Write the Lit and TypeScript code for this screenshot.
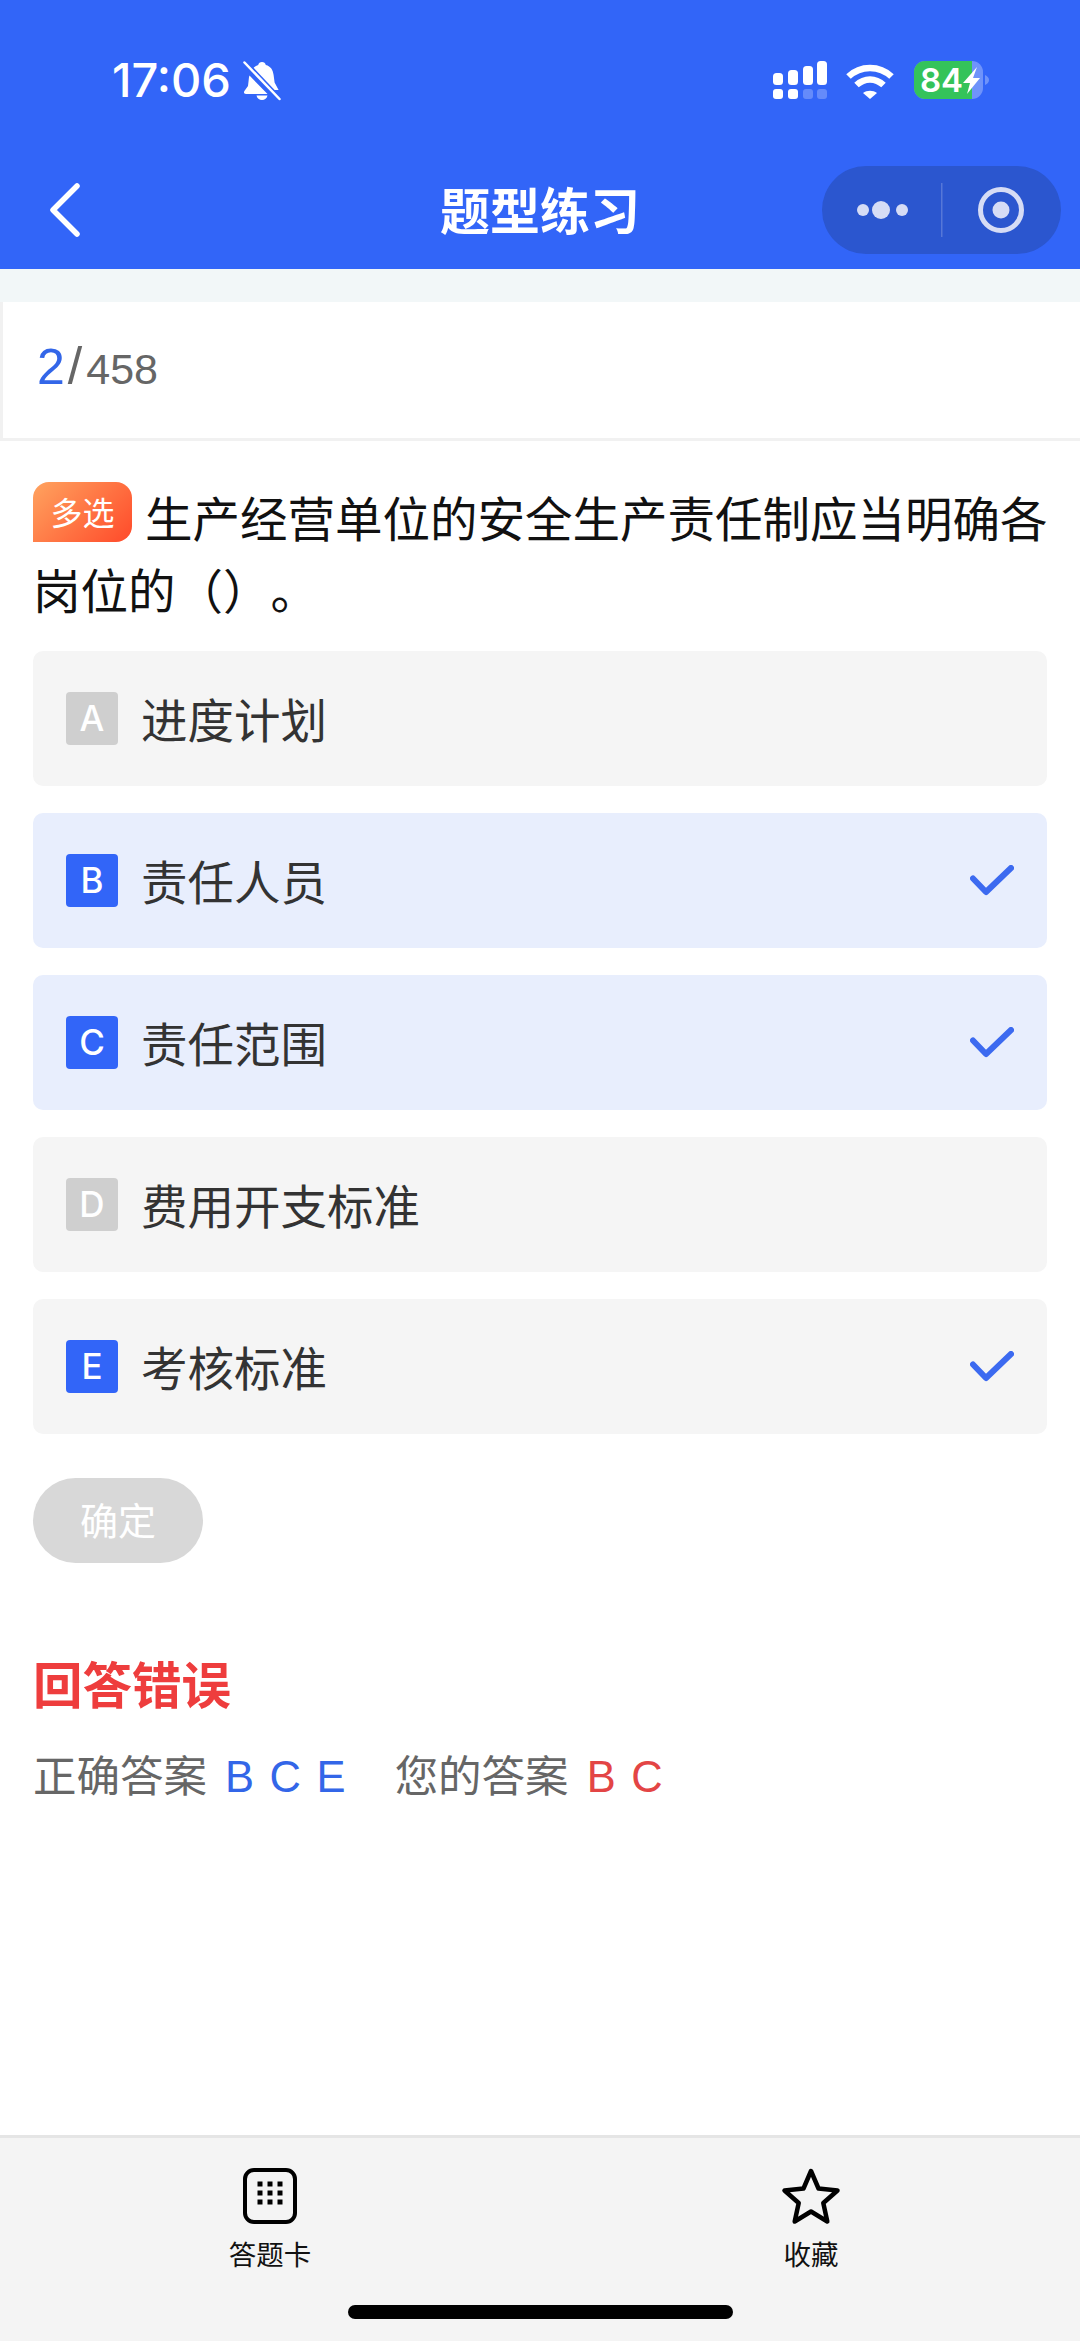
import { LitElement, html, css, svg } from "lit";
import { customElement } from "lit/decorators.js";

const options = [
  { k: "A", t: "进度计划", sel: false, check: false },
  { k: "B", t: "责任人员", sel: true, check: true },
  { k: "C", t: "责任范围", sel: true, check: true },
  { k: "D", t: "费用开支标准", sel: false, check: false },
  { k: "E", t: "考核标准", sel: false, check: true },
];

@customElement("app-root")
export class AppRoot extends LitElement {
  static styles = css`
    :host {
      display: flex;
      flex-direction: column;
      width: 1080px;
      height: 2341px;
      background: #fff;
      font-family: "Liberation Sans", "Noto Sans CJK SC", sans-serif;
      overflow: hidden;
    }
    .header { height: 269px; background: #3265f8; color: #fff; flex: none; display: flex; flex-direction: column; }
    .status { height: 164px; display: flex; padding: 61px 0 0 112px; box-sizing: border-box; }
    .time { font: 500 47px/38px Inter, sans-serif; width: 131px; }
    .bell { width: 38px; height: 40px; }
    .status-right { margin-left: auto; margin-right: 90px; display: flex; align-items: flex-start; }
    .signal { width: 54px; height: 38px; margin: 0 19px 0 2px; }
    .wifi { width: 48px; height: 36px; margin: 2px 20px 0 0; }
    .battery { width: 76px; height: 38px; }
    .nav { height: 105px; display: flex; align-items: center; padding: 0 19px 9px 49px; position: relative; }
    .back { width: 32px; height: 54px; }
    .title { position: absolute; left: 0; right: 0; top: 20px; text-align: center; font: 700 50px/56px "Noto Sans CJK SC", sans-serif; }
    .capsule { margin-left: auto; width: 239px; height: 88px; border-radius: 44px; background: #2b56cf; }
    .capsule svg { width: 239px; height: 88px; display: block; }
    .band { height: 33px; background: #f2f7f8; flex: none; }
    .progress {
      height: 139px; box-sizing: border-box; flex: none;
      border: 3px solid #f1f1f1; border-top: none; border-right: none;
      padding-left: 34px; color: #666; font-size: 43px; line-height: 134px; white-space: pre;
    }
    .progress b { font-weight: 400; color: #3366e8; font-size: 50px; line-height: 1; margin-right: 2px; }
    .progress i { font-style: normal; font-size: 52px; line-height: 1; margin: 0 4px 0 1px; }
    .main { flex: 1; padding: 39.500px 33px 0; }
    .q {
      font: 400 47.500px/72px "Noto Sans CJK SC", sans-serif; color: #111; margin: 0 -6px 26.500px 0;
      text-spacing-trim: space-all;
    }
    .tag {
      display: inline-block; width: 99px; height: 60px; vertical-align: 11.500px;
      box-sizing: border-box; margin-right: 13px; text-align: center;
      border-radius: 16px 16px 16px 0; color: #fff; font: 400 32px/58px "Noto Sans CJK SC", sans-serif;
      background: linear-gradient(135deg, #ffa35f, #ff4a2a);
    }
    .opt {
      height: 135px; margin-bottom: 27px; border-radius: 10px; background: #f5f5f5;
      display: flex; align-items: center; padding: 0 33px; box-sizing: border-box;
      color: #333; font: 400 46.500px/60px "Noto Sans CJK SC", sans-serif;
    }
    .opt span { padding-bottom: 2px; }
    .opt.sel { background: #e8eefd; }
    .key {
      width: 52px; height: 53px; border-radius: 4px; background: #cfcfcf; color: #fff; margin-right: 23px;
      display: flex; align-items: center; justify-content: center; font: 500 35px/1 Inter, sans-serif;
    }
    .sel .key, .chk .key { background: #3265f8; }
    .check { margin-left: auto; margin-right: 0; width: 44px; height: 32px; }
    .btn {
      width: 170px; height: 85px; border-radius: 43px; background: #d8d8d8; color: #fff; margin-top: 44px;
      box-sizing: border-box; padding-bottom: 3px;
      display: flex; align-items: center; justify-content: center; font: 400 38px/1 "Noto Sans CJK SC", sans-serif;
    }
    .wrong { margin-top: 90px; color: #ee3d3d; font: 700 49.500px/60px "Noto Sans CJK SC", sans-serif; }
    .ans { margin-top: 31px; color: #666; font: 400 43.500px/60px "Noto Sans CJK SC", sans-serif; white-space: pre; }
    .ans .l { font-family: "Liberation Sans", sans-serif; word-spacing: 3.500px; }
    .blue { color: #3366e8; margin: 0 49px 0 18px; }
    .red { color: #e34545; margin-left: 18px; }
    .tabbar { flex: none; height: 206px; box-sizing: border-box; background: #f4f4f4; border-top: 3px solid #e5e5e5; position: relative; display: flex; padding-top: 28px; }
    .tab { position: absolute; top: 28px; display: flex; flex-direction: column; align-items: center; width: 120px; font: 400 27.500px/34px "Noto Sans CJK SC", sans-serif; color: #111; }
    .tab svg { width: 60px; height: 60px; margin-bottom: 10px; display: block; }
    .t1 { left: 210px; }
    .t2 { left: 751px; }
    .homebar { position: absolute; left: 348px; top: 167px; width: 385px; height: 14px; border-radius: 7px; background: #000; }
  `;

  render() {
    return html`
      <div class="header">
        <div class="status">
          <div class="time">17:06</div>
          <svg class="bell" viewBox="0 0 38 40" fill="#fff">
            <path d="M19 1c2 0 3.400 1.200 3.800 3 5 1.300 7.200 5 7.800 10l1 7.500 4 7.500-5 0L9.500 8C11 6 13 4.600 15.200 4 15.600 2.200 17 1 19 1zM6.500 14.500L24.500 33H3c-1.800 0-2.600-1.500-1.600-3l3.600-5 .8-7c0-1.200.3-2.400.7-3.500zM13.500 34.500h11c-.6 2.800-2.800 4.500-5.500 4.500s-4.900-1.700-5.500-4.500z"/>
            <path d="M2 2l34 36" stroke="#3265f8" stroke-width="6"/>
            <path d="M1.500 1.500l35 36.500" stroke="#fff" stroke-width="2.500" stroke-linecap="round"/>
          </svg>
          <div class="status-right">
            <svg class="signal" viewBox="0 0 54 38" fill="#fff">
              <rect x="0" y="12" width="10" height="12" rx="3.500"/>
              <rect x="15" y="9" width="10" height="15" rx="3.500"/>
              <rect x="30" y="5" width="10" height="19" rx="3.500"/>
              <rect x="44" y="0" width="10" height="24" rx="3.500"/>
              <rect x="0" y="28" width="10" height="10" rx="3"/>
              <rect x="15" y="28" width="10" height="10" rx="3"/>
              <rect x="30" y="28" width="10" height="10" rx="3" opacity=".25"/>
              <rect x="44" y="28" width="10" height="10" rx="3" opacity=".25"/>
            </svg>
            <svg class="wifi" viewBox="0 0 48 36" fill="none" stroke="#fff" stroke-width="6.500">
              <path d="M2.500 13.500C14.500 2 33.500 2 45.500 13.500"/>
              <path d="M10.500 22c8-7.500 19-7.500 27 0"/>
              <path d="M17 30l7 6 7-6c-4-3-10-3-14 0z" fill="#fff" stroke="none"/>
            </svg>
            <svg class="battery" viewBox="0 0 76 38">
              <rect x="0" y="0" width="69" height="38" rx="11" fill="#fff" opacity=".3"/>
              <path d="M11 0h47v38H11A11 11 0 0 1 0 27V11A11 11 0 0 1 11 0z" fill="#34c35a"/>
              <path d="M71 14c2.500 1 4 3 4 5s-1.500 4-4 5z" fill="#fff" opacity=".3"/>
              <text x="6" y="31" fill="#fff" font-family="Inter, sans-serif" font-size="33" font-weight="600">84</text>
              <path d="M63 6L49 22h7l-3 11 13-16h-7z" fill="#fff"/>
            </svg>
          </div>
        </div>
        <div class="nav">
          <svg class="back" viewBox="0 0 32 54" fill="none" stroke="#fff" stroke-width="5.500" stroke-linecap="round" stroke-linejoin="round">
            <path d="M28 3L4 27l24 24"/>
          </svg>
          <div class="title">题型练习</div>
          <div class="capsule">
            <svg viewBox="0 0 239 88">
              <g fill="#d6dcf5">
                <circle cx="41" cy="44" r="6"/>
                <circle cx="59" cy="44" r="9"/>
                <circle cx="80" cy="44" r="6"/>
                <rect x="119" y="17" width="1.500" height="54" opacity=".25"/>
                <circle cx="179" cy="44" r="8.500"/>
              </g>
              <circle cx="179" cy="44" r="20.500" fill="none" stroke="#d6dcf5" stroke-width="5"/>
            </svg>
          </div>
        </div>
      </div>
      <div class="band"></div>
      <div class="progress"><b>2</b><i>/</i>458</div>
      <div class="main">
        <p class="q"><span class="tag">多选</span>生产经营单位的安全生产责任制应当明确各岗位的（）。</p>
        ${options.map(
          (o) => html`
            <div class="opt ${o.sel ? "sel" : ""} ${o.check ? "chk" : ""}">
              <div class="key">${o.k}</div>
              <span>${o.t}</span>
              ${o.check
                ? svg`<svg class="check" viewBox="0 0 44 32" fill="none" stroke="#3c6af0" stroke-width="6" stroke-linecap="round" stroke-linejoin="round"><path d="M3 13.500L16 27 41 3"/></svg>`
                : ""}
            </div>
          `
        )}
        <div class="btn">确定</div>
        <div class="wrong">回答错误</div>
        <div class="ans">正确答案<span class="l blue">B C E</span>您的答案<span class="l red">B C</span></div>
      </div>
      <div class="tabbar">
        <div class="tab t1">
          <svg viewBox="0 0 60 60">
            <rect x="5" y="4" width="50" height="52" rx="9" fill="none" stroke="#000" stroke-width="4"/>
            <g fill="#000">
              ${[18, 27, 36].map((y) =>
                [20, 30, 40].map((x) => svg`<rect x=${x - 2.500} y=${y - 2.500} width="5" height="5"/>`)
              )}
            </g>
          </svg>
          答题卡
        </div>
        <div class="tab t2">
          <svg viewBox="0 0 60 60">
            <path d="M30 5l7.500 17.500 19 2-14.200 12.500 4 18.500L30 45.500 13.700 55.500l4-18.500L3.500 24.500l19-2z" fill="none" stroke="#000" stroke-width="4.500" stroke-linejoin="round"/>
          </svg>
          收藏
        </div>
        <div class="homebar"></div>
      </div>
    `;
  }
}
